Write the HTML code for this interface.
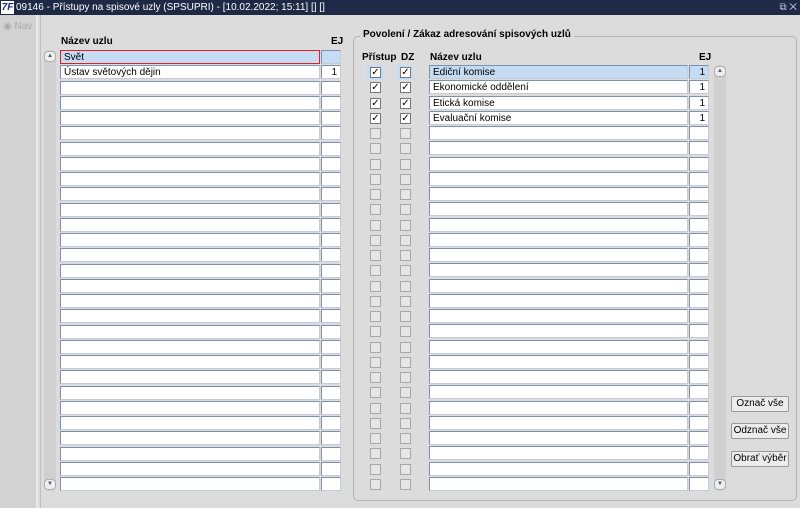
<!DOCTYPE html>
<html><head><meta charset="utf-8"><style>
*{margin:0;padding:0;box-sizing:border-box}
body{width:800px;height:508px;overflow:hidden;background:#dcdcdc;font-family:"Liberation Sans",sans-serif;font-size:10px;color:#000;position:relative}
.a{position:absolute}
.title{left:0;top:0;width:800px;height:15px;background:#1e2a45;color:#fff;font-size:10px;line-height:15px;white-space:nowrap}
.col{display:flex;flex-direction:column}
.col i{display:block;height:14px;margin-bottom:1.25px;background:#fff;border:1px solid #c4ccd8;border-top-color:#7f90ad;border-left-color:#7f90ad;font-style:normal;line-height:13px;padding-left:3px;white-space:nowrap;overflow:hidden}
.col.r i{text-align:right;padding-right:3px}
.col i.s{background:#c4dcf4}
.cbc{display:flex;flex-direction:column}
.cbc b{display:block;width:11px;height:11px;margin:2px 0 2.25px 0;border:1px solid #a8a8a8;background:#e6e6e6;font-size:10px;line-height:9px;text-align:center;font-weight:normal}
.cbc b.c{border-color:#777;background:#fff}
.sb{background:#d0d0d0;border-radius:5px}
.arr{width:12px;height:11px;border:1px solid #aab;border-radius:4px;background:#eee;font-size:6px;text-align:center;line-height:9px;color:#556}
.btn{left:731px;width:58px;height:16px;border:1px solid #999;background:#ececec;text-align:center;line-height:14px;font-size:10px;border-radius:2px;white-space:nowrap}
.h{font-weight:bold;font-size:10px}
</style></head><body>
<div class="a title"><span style="display:inline-block;width:13px;height:13px;background:#fff;color:#1e2a8a;font-weight:bold;font-style:italic;font-size:10px;line-height:13px;margin:1px 2px 0 1px;vertical-align:top;text-align:center">7F</span>09146 - Přístupy na spisové uzly (SPSUPRI) - [10.02.2022; 15:11] [] []</div>
<div class="a" style="right:3px;top:2px;color:#ccd;font-size:10px">⧉ ✕</div>
<div class="a" style="left:0;top:15px;width:38px;height:493px;background:#d2d2d2;border-right:2px solid #eaeaea"></div>
<div class="a" style="left:3px;top:21px;color:#aaa;font-size:10px">◉ Nav</div>
<div class="a" style="left:40px;top:15px;width:1px;height:493px;background:#c0c0c0"></div>

<div class="a h" style="left:61px;top:36px">Název uzlu</div>
<div class="a h" style="left:331px;top:36px">EJ</div>
<div class="a sb" style="left:44px;top:50px;width:12px;height:441px"></div>
<div class="a arr" style="left:44px;top:51px">▲</div>
<div class="a arr" style="left:44px;top:479px">▼</div>
<div class="a col" style="left:60px;top:50px;width:260px">
<i class="s" style="border:1px solid #e02020">Svět</i><i>Ústav světových dějin</i><i></i><i></i><i></i><i></i><i></i><i></i><i></i><i></i><i></i><i></i><i></i><i></i><i></i><i></i><i></i><i></i><i></i><i></i><i></i><i></i><i></i><i></i><i></i><i></i><i></i><i></i><i></i></div>
<div class="a col r" style="left:321px;top:50px;width:20px">
<i class="s"></i><i>1</i><i></i><i></i><i></i><i></i><i></i><i></i><i></i><i></i><i></i><i></i><i></i><i></i><i></i><i></i><i></i><i></i><i></i><i></i><i></i><i></i><i></i><i></i><i></i><i></i><i></i><i></i><i></i></div>

<div class="a" style="left:353px;top:36px;width:444px;height:465px;border:1px solid #b4b4b4;border-radius:5px"></div>
<div class="a h" style="left:360px;top:29px;background:#dcdcdc;padding:0 3px">Povolení / Zákaz adresování spisových uzlů</div>
<div class="a h" style="left:362px;top:52px">Přístup</div>
<div class="a h" style="left:401px;top:52px">DZ</div>
<div class="a h" style="left:430px;top:52px">Název uzlu</div>
<div class="a h" style="left:699px;top:52px">EJ</div>
<div class="a" style="left:367px;top:65px;width:16px;height:15px;background:#c4dcf4"></div>
<div class="a" style="left:397px;top:65px;width:16px;height:15px;background:#c4dcf4"></div>
<div class="a cbc" style="left:370px;top:65px">
<b class="c">✓</b><b class="c">✓</b><b class="c">✓</b><b class="c">✓</b><b></b><b></b><b></b><b></b><b></b><b></b><b></b><b></b><b></b><b></b><b></b><b></b><b></b><b></b><b></b><b></b><b></b><b></b><b></b><b></b><b></b><b></b><b></b><b></b></div>
<div class="a cbc" style="left:400px;top:65px">
<b class="c">✓</b><b class="c">✓</b><b class="c">✓</b><b class="c">✓</b><b></b><b></b><b></b><b></b><b></b><b></b><b></b><b></b><b></b><b></b><b></b><b></b><b></b><b></b><b></b><b></b><b></b><b></b><b></b><b></b><b></b><b></b><b></b><b></b></div>
<div class="a col" style="left:429px;top:65px;width:259px">
<i class="s">Ediční komise</i><i>Ekonomické oddělení</i><i>Etická komise</i><i>Evaluační komise</i><i></i><i></i><i></i><i></i><i></i><i></i><i></i><i></i><i></i><i></i><i></i><i></i><i></i><i></i><i></i><i></i><i></i><i></i><i></i><i></i><i></i><i></i><i></i><i></i></div>
<div class="a col r" style="left:689px;top:65px;width:20px">
<i class="s">1</i><i>1</i><i>1</i><i>1</i><i></i><i></i><i></i><i></i><i></i><i></i><i></i><i></i><i></i><i></i><i></i><i></i><i></i><i></i><i></i><i></i><i></i><i></i><i></i><i></i><i></i><i></i><i></i><i></i></div>
<div class="a sb" style="left:714px;top:65px;width:12px;height:426px"></div>
<div class="a arr" style="left:714px;top:66px">▲</div>
<div class="a arr" style="left:714px;top:479px">▼</div>
<div class="a btn" style="top:396px">Označ vše</div>
<div class="a btn" style="top:423px">Odznač vše</div>
<div class="a btn" style="top:451px">Obrať výběr</div>
</body></html>
